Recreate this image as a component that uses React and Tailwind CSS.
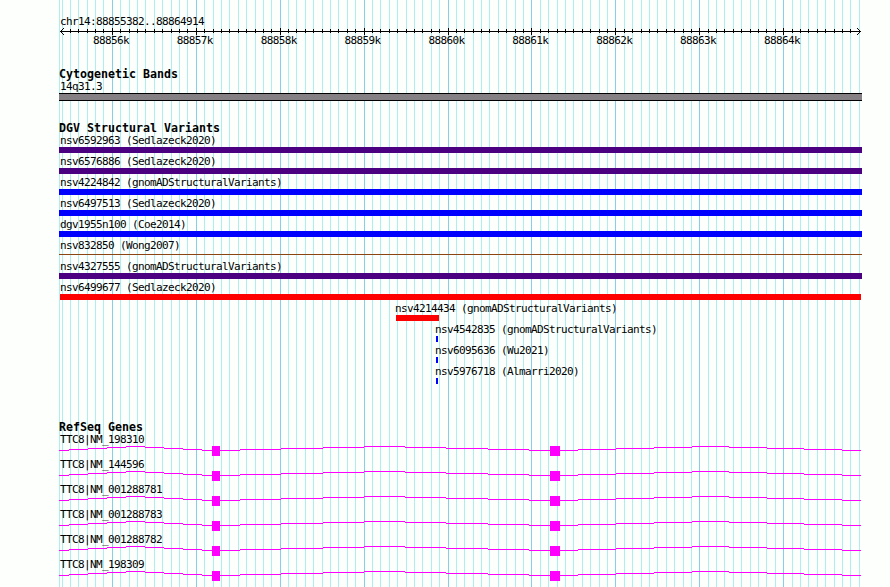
import React from "react";

const LEFT = 59;
const RIGHT = 862;
const HEIGHT = 587;

// screen position of a 100bp step, counted from 88,856,000
const stepX = (n) => Math.floor(112.38 + n * 8.3915);
const steps = Array.from({ length: 96 }, (_, i) => i - 6);

const variants = [
  { name: "nsv6592963 (Sedlazeck2020)", color: "bg-[#4b0082]" },
  { name: "nsv6576886 (Sedlazeck2020)", color: "bg-[#4b0082]" },
  { name: "nsv4224842 (gnomADStructuralVariants)", color: "bg-[#0000ff]" },
  { name: "nsv6497513 (Sedlazeck2020)", color: "bg-[#0000ff]" },
  { name: "dgv1955n100 (Coe2014)", color: "bg-[#0000ff]" },
  { name: "nsv832850 (Wong2007)", color: "bg-[#8b4513]", thin: true },
  { name: "nsv4327555 (gnomADStructuralVariants)", color: "bg-[#4b0082]" },
  { name: "nsv6499677 (Sedlazeck2020)", color: "bg-[#ff0000]", start: 60, end: 861 },
  { name: "nsv4214434 (gnomADStructuralVariants)", color: "bg-[#ff0000]", start: 396, end: 439 },
  { name: "nsv4542835 (gnomADStructuralVariants)", color: "bg-[#0000ff]", start: 436, end: 438 },
  { name: "nsv6095636 (Wu2021)", color: "bg-[#0000ff]", start: 436, end: 438 },
  { name: "nsv5976718 (Almarri2020)", color: "bg-[#0000ff]", start: 436, end: 438 },
];

const genes = [
  "TTC8|NM_198310",
  "TTC8|NM_144596",
  "TTC8|NM_001288781",
  "TTC8|NM_001288783",
  "TTC8|NM_001288782",
  "TTC8|NM_198309",
];

// [x start, height above the gene baseline]
const intron = [
  [59, 0], [69, 1], [88, 2], [107, 3], [126, 4], [145, 3], [164, 2], [183, 1], [202, 0],
  [240, 1], [281, 2], [323, 3], [364, 4], [405, 3], [446, 2], [488, 1], [529, 0],
  [578, 1], [616, 2], [654, 3], [692, 4], [729, 3], [767, 2], [804, 1], [842, 0],
];

const Label = ({ children, className = "" }) => (
  <div
    className={`whitespace-pre text-[11px] leading-[12px] tracking-[-0.622px] text-black ${className}`}
  >
    {children}
  </div>
);

const Heading = ({ children }) => (
  <h2 className="h-[13px] whitespace-pre font-bold text-[11.63px] leading-[13px] text-black">
    {children}
  </h2>
);

/* ── Vertical grid behind all tracks ── */
const Grid = () => (
  <svg
    className="absolute inset-0"
    width="890"
    height={HEIGHT}
    shapeRendering="crispEdges"
  >
    <rect x={LEFT} width="1" height={HEIGHT} fill="#afeeee" />
    {steps.map((n) => (
      <rect
        key={n}
        x={stepX(n)}
        width="1"
        height={HEIGHT}
        fill={n % 10 === 0 ? "#87ceeb" : "#afeeee"}
      />
    ))}
  </svg>
);

const Ruler = () => (
  <div className="h-[40px]">
    <svg
      className="block"
      width="803"
      height="7"
      viewBox="59 28 803 7"
      shapeRendering="crispEdges"
    >
      <rect x="60" y="31" width="801" height="1" />
      {steps.filter((n) => n > -6 && n < 89).map((n) => (
        <rect
          key={n}
          x={stepX(n)}
          y={n % 10 === 0 ? 28 : 29}
          width="1"
          height={n % 10 === 0 ? 7 : 4}
        />
      ))}
      {[1, 2, 3].map((d) => (
        <g key={d}>
          <rect x={60 + d} y={31 - d} width="1" height="1" />
          <rect x={60 + d} y={31 + d} width="1" height="1" />
          <rect x={860 - d} y={31 - d} width="1" height="1" />
          <rect x={860 - d} y={31 + d} width="1" height="1" />
        </g>
      ))}
    </svg>
    <div className="flex pl-[10px]">
      {[6, 7, 8, 9, 10, 11, 12, 13, 14].map((k) => (
        <div key={k} className="w-[83.875px] flex justify-center">
          <Label>{`${88850 + k}k`}</Label>
        </div>
      ))}
    </div>
  </div>
);

const Variant = ({ name, color, start = LEFT, end = RIGHT, thin }) => (
  <div className="h-[21px]" style={{ paddingLeft: start - LEFT }}>
    <Label className={start === LEFT ? "pl-px" : start === 60 ? "" : "-ml-px"}>
      {name}
    </Label>
    <div
      className={`${color} ${thin ? "h-px mt-[2px]" : "h-[6px]"}`}
      style={{ width: end - start }}
    />
  </div>
);

const Gene = ({ name }) => (
  <div className="h-[25px]">
    <Label className="pl-px h-[11px]">{name}</Label>
    <svg
      className="block"
      width="803"
      height="11"
      viewBox="59 445 803 11"
      fill="#ff00ff"
      shapeRendering="crispEdges"
    >
      {intron.map(([x, up], i) => (
        <rect
          key={x}
          x={x}
          y={450 - up}
          width={(intron[i + 1]?.[0] ?? 861) - x}
          height="1"
        />
      ))}
      <rect x="212" y="446" width="8" height="10" />
      <rect x="550" y="446" width="10" height="10" />
    </svg>
  </div>
);

const App = () => (
  <div className="relative w-[890px] h-[587px] overflow-hidden bg-[#fdfffc] font-['DejaVu_Sans_Mono',monospace]">
    <Grid />
    <main className="relative ml-[59px] w-[803px] pt-[16px]">
      <Label className="pl-px">chr14:88855382..88864914</Label>
      <Ruler />

      <section>
        <Heading>Cytogenetic Bands</Heading>
        <Label className="pl-px">14q31.3</Label>
        <div className="h-[8px] border-y border-black bg-[#848084]" />
      </section>

      <section className="pt-[21px]">
        <Heading>DGV Structural Variants</Heading>
        {variants.map((v) => (
          <Variant key={v.name} {...v} />
        ))}
      </section>

      <section className="pt-[34px]">
        <Heading>RefSeq Genes</Heading>
        {genes.map((g) => (
          <Gene key={g} name={g} />
        ))}
      </section>
    </main>
  </div>
);

export default App;
